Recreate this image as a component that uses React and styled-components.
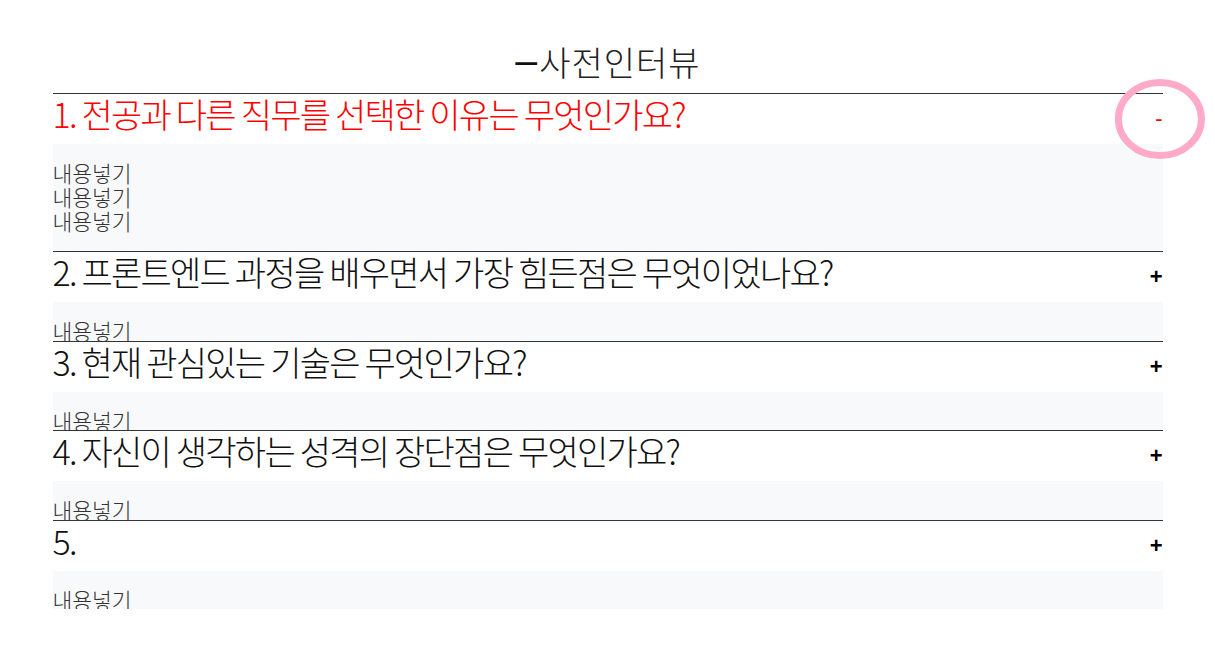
import React, { useState } from "react";
import styled, { createGlobalStyle } from "styled-components";

const GlobalStyle = createGlobalStyle`
  body {
    margin: 0;
    background: #fff;
    font-family: "Noto Sans CJK KR", "Noto Sans", sans-serif;
    color: #212529;
  }
`;

const Page = styled.div`
  width: 1110px;
  margin: 0 auto;
  padding-top: 31px;
`;

const Title = styled.h2`
  margin: 0;
  text-align: center;
  font-size: 34px;
  font-weight: 300;
  letter-spacing: 1px;
  line-height: 62px;
  height: 62px;
  color: #222;
`;

const Dash = styled.span`
  font-size: 26px;
  font-weight: 700;
  line-height: 0;
  vertical-align: 2px;
  color: #111;
`;

const List = styled.div`
  display: flex;
  flex-direction: column;
`;

const Item = styled.div`
  border-top: 1px solid #333;
`;

const Question = styled.div`
  display: flex;
  align-items: flex-start;
  justify-content: space-between;
  height: 50px;
  cursor: pointer;
  color: ${(p) => (p.$open ? "#ff0000" : "#111")};
`;

const QuestionText = styled.span`
  font-size: 34px;
  font-weight: 300;
  letter-spacing: -1.75px;
  line-height: 40px;
`;

const Sign = styled.span`
  position: relative;
  font-size: 22px;
  line-height: 50px;
  font-weight: ${(p) => (p.$open ? 400 : 700)};
  font-family: "Liberation Sans", sans-serif;
  color: ${(p) => (p.$open ? "#ff0000" : "#000")};
`;

const Circle = styled.svg`
  position: absolute;
  left: 50%;
  top: 50%;
  width: 92px;
  height: 82px;
  transform: translate(-49%, -50%);
  pointer-events: none;
`;

const Panel = styled.div`
  background: #f8f9fa;
  padding-top: 17px;
  height: ${(p) => (p.$open ? "90px" : "21.5px")};
  overflow: hidden;
  font-size: 21.5px;
  font-weight: 300;
  line-height: 24px;
  color: #333;
`;

const questions = [
  { q: "1. 전공과 다른 직무를 선택한 이유는 무엇인가요?", a: ["내용넣기", "내용넣기", "내용넣기"] },
  { q: "2. 프론트엔드 과정을 배우면서 가장 힘든점은 무엇이었나요?", a: ["내용넣기"] },
  { q: "3. 현재 관심있는 기술은 무엇인가요?", a: ["내용넣기"] },
  { q: "4. 자신이 생각하는 성격의 장단점은 무엇인가요?", a: ["내용넣기"] },
  { q: "5.", a: ["내용넣기"] },
];

const App = () => {
  const [open, setOpen] = useState(0);

  return (
    <>
      <GlobalStyle />
      <Page>
        <Title>
          <Dash>ㅡ</Dash>사전인터뷰
        </Title>
        <List>
          {questions.map((item, i) => {
            const isOpen = open === i;
            return (
              <Item key={i}>
                <Question $open={isOpen} onClick={() => setOpen(isOpen ? -1 : i)}>
                  <QuestionText>{item.q}</QuestionText>
                  <Sign $open={isOpen}>
                    {isOpen ? "-" : "+"}
                    {isOpen && (
                      <Circle viewBox="0 0 92 82">
                        <ellipse cx="46" cy="41" rx="41.5" ry="36.5" fill="none" stroke="#ffaac8" strokeWidth="7" />
                      </Circle>
                    )}
                  </Sign>
                </Question>
                <Panel $open={isOpen}>
                  {item.a.map((line, j) => (
                    <div key={j}>{line}</div>
                  ))}
                </Panel>
              </Item>
            );
          })}
        </List>
      </Page>
    </>
  );
};

export default App;
